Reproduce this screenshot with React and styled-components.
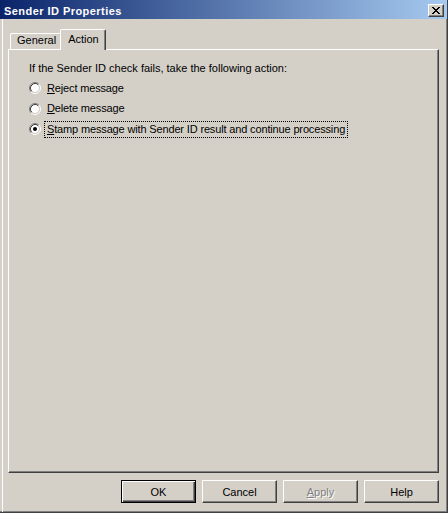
import React from "react";
import styled, { createGlobalStyle } from "styled-components";

const GlobalStyle = createGlobalStyle`
  html, body {
    margin: 0;
    padding: 0;
    background: #d4d0c8;
  }
  * {
    box-sizing: border-box;
  }
`;

const Window = styled.div`
  width: 448px;
  height: 513px;
  display: flex;
  flex-direction: column;
  background: #d4d0c8;
  border-right: 1px solid #404040;
  border-bottom: 1px solid #404040;
  box-shadow: inset -1px -1px #808080;
  font-family: "Liberation Sans", Arial, sans-serif;
  font-size: 11px;
  color: #000;
`;

const TitleBar = styled.div`
  height: 19px;
  flex: none;
  display: flex;
  justify-content: space-between;
  align-items: flex-start;
  padding: 0 3px 0 4px;
  background: linear-gradient(to right, #0a246a, #a6caf0);
  color: #fff;
  font-weight: bold;
  font-size: 11px;
  letter-spacing: 0.45px;
`;

const TitleText = styled.span`
  line-height: 13px;
  margin-top: 5px;
`;

const CloseButton = styled.div`
  width: 16px;
  height: 13px;
  margin-top: 4px;
  display: flex;
  align-items: center;
  justify-content: center;
  background: #d4d0c8;
  border: 1px solid;
  border-color: #fff #404040 #404040 #fff;
  box-shadow: inset -1px -1px #808080;
`;

const Body = styled.div`
  flex: 1;
  display: flex;
  flex-direction: column;
  margin-left: 2px;
  border-left: 1px solid #fff;
  padding: 10px 8px 9px 5px;
`;

const TabStrip = styled.div`
  height: 20px;
  flex: none;
  display: flex;
  align-items: flex-start;
  padding-left: 2px;
`;

const Tab = styled.div`
  position: relative;
  z-index: ${(p) => (p.$active ? 2 : 1)};
  margin-top: ${(p) => (p.$active ? 0 : 4)}px;
  margin-left: ${(p) => (p.$active ? -2 : 0)}px;
  height: ${(p) => (p.$active ? 21 : 16)}px;
  padding: ${(p) => (p.$active ? "3px 6px 0 7px" : "0 5px 0 6px")};
  line-height: 13px;
  background: #d4d0c8;
  border-top: 1px solid #fff;
  border-left: 1px solid #fff;
  border-right: 1px solid #404040;
  border-top-left-radius: 2px;
  border-top-right-radius: 2px;
  box-shadow: inset -1px 0 #808080;
`;

const Panel = styled.div`
  flex: 1;
  display: flex;
  flex-direction: column;
  border: 1px solid;
  border-color: #fff #404040 #404040 #fff;
  box-shadow: inset -1px -1px #808080;
  padding: 12px 20px 0 20px;
`;

const Intro = styled.div`
  line-height: 13px;
  margin-bottom: 3px;
`;

const OptionRow = styled.div`
  height: 20.5px;
  display: flex;
  align-items: center;
`;

const OptionLabel = styled.span`
  margin-left: 3px;
  padding: 0 2px;
  line-height: 15px;
  letter-spacing: -0.15px;
  border: 1px dotted ${(p) => (p.$focused ? "#000" : "transparent")};
`;

const Key = styled.span`
  text-decoration: underline;
`;

const ButtonRow = styled.div`
  flex: none;
  display: flex;
  justify-content: flex-end;
  gap: 6px;
  margin-top: 7px;
`;

const Button = styled.div`
  width: 75px;
  height: 23px;
  display: flex;
  align-items: center;
  justify-content: center;
  background: #d4d0c8;
  border: 1px solid;
  border-color: ${(p) => (p.$default ? "#000" : "#fff #404040 #404040 #fff")};
  box-shadow: ${(p) =>
    p.$default
      ? "inset 1px 1px #fff, inset -1px -1px #404040, inset -2px -2px #808080"
      : "inset -1px -1px #808080"};
  color: ${(p) => (p.$disabled ? "#808080" : "#000")};
  text-shadow: ${(p) => (p.$disabled ? "1px 1px 0 #fff" : "none")};
`;

const CloseGlyph = () => (
  <svg width="8" height="7" viewBox="0 0 8 7" shapeRendering="crispEdges">
    <path
      fill="#000"
      d="M0 0h2v1h-2zM6 0h2v1h-2zM1 1h2v1h-2zM5 1h2v1h-2zM2 2h4v1h-4zM3 3h2v1h-2zM2 4h4v1h-4zM1 5h2v1h-2zM5 5h2v1h-2zM0 6h2v1h-2zM6 6h2v1h-2z"
    />
  </svg>
);

const Radio = ({ checked }) => (
  <svg width="12" height="12" viewBox="0 0 12 12">
    <circle cx="6" cy="6" r="4" fill="#fff" />
    <path d="M2.11 9.89A5.5 5.5 0 0 1 9.89 2.11" fill="none" stroke="#808080" />
    <path d="M9.89 2.11A5.5 5.5 0 0 1 2.11 9.89" fill="none" stroke="#fff" />
    <path d="M2.82 9.18A4.5 4.5 0 0 1 9.18 2.82" fill="none" stroke="#404040" />
    <path d="M9.18 2.82A4.5 4.5 0 0 1 2.82 9.18" fill="none" stroke="#d4d0c8" />
    {checked && <circle cx="6" cy="6" r="2" fill="#000" />}
  </svg>
);

const options = [
  { key: "R", rest: "eject message" },
  { key: "D", rest: "elete message" },
  { key: "S", rest: "tamp message with Sender ID result and continue processing", checked: true },
];

export default function App() {
  return (
    <>
      <GlobalStyle />
      <Window>
        <TitleBar>
          <TitleText>Sender ID Properties</TitleText>
          <CloseButton>
            <CloseGlyph />
          </CloseButton>
        </TitleBar>
        <Body>
          <TabStrip>
            <Tab>General</Tab>
            <Tab $active>Action</Tab>
          </TabStrip>
          <Panel>
            <Intro>If the Sender ID check fails, take the following action:</Intro>
            {options.map((o) => (
              <OptionRow key={o.key}>
                <Radio checked={o.checked} />
                <OptionLabel $focused={o.checked}>
                  <Key>{o.key}</Key>
                  {o.rest}
                </OptionLabel>
              </OptionRow>
            ))}
          </Panel>
          <ButtonRow>
            <Button $default>OK</Button>
            <Button>Cancel</Button>
            <Button $disabled>
              <Key>A</Key>pply
            </Button>
            <Button>Help</Button>
          </ButtonRow>
        </Body>
      </Window>
    </>
  );
}
